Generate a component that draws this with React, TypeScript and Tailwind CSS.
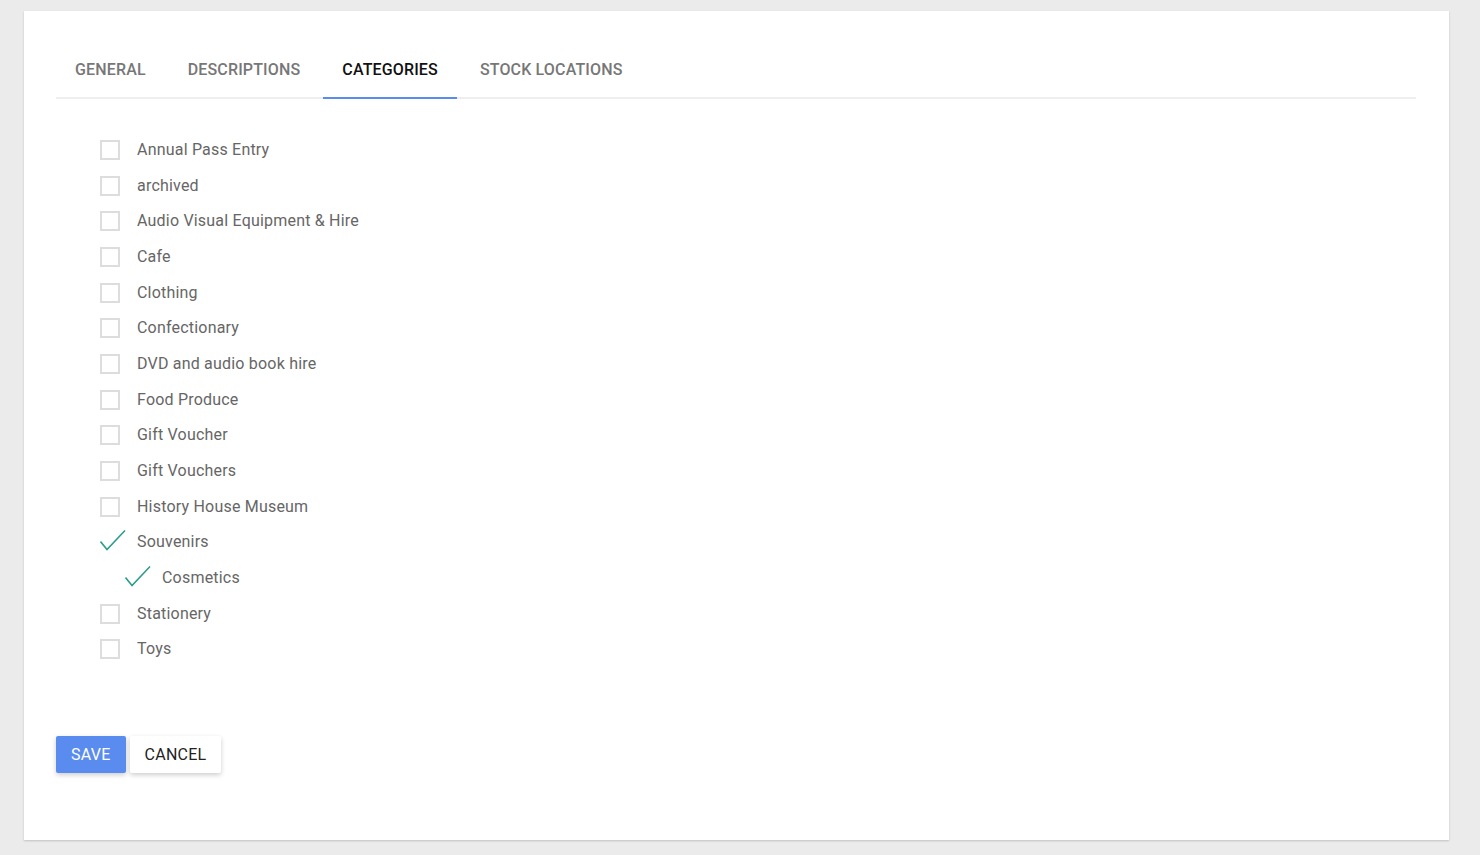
import { useState } from "react";

const tabs = ["General", "Descriptions", "Categories", "Stock Locations"];

type Category = { name: string; level: number };

const categories: Category[] = [
  { name: "Annual Pass Entry", level: 0 },
  { name: "archived", level: 0 },
  { name: "Audio Visual Equipment & Hire", level: 0 },
  { name: "Cafe", level: 0 },
  { name: "Clothing", level: 0 },
  { name: "Confectionary", level: 0 },
  { name: "DVD and audio book hire", level: 0 },
  { name: "Food Produce", level: 0 },
  { name: "Gift Voucher", level: 0 },
  { name: "Gift Vouchers", level: 0 },
  { name: "History House Museum", level: 0 },
  { name: "Souvenirs", level: 0 },
  { name: "Cosmetics", level: 1 },
  { name: "Stationery", level: 0 },
  { name: "Toys", level: 0 },
];

export default function App() {
  const [active, setActive] = useState("Categories");
  const [checked, setChecked] = useState<string[]>(["Souvenirs", "Cosmetics"]);

  const toggle = (name: string) =>
    setChecked((prev) =>
      prev.includes(name) ? prev.filter((n) => n !== name) : [...prev, name]
    );

  return (
    <div className="min-h-screen bg-[#ebebeb] pt-[11px] pl-6 pr-[31px] font-['Roboto',sans-serif]">
      <div className="h-[829px] bg-white pt-[30px] pl-8 pr-[33px] shadow-[0_1px_2px_rgba(0,0,0,0.18)]">
        {/* tabs */}
        <div className="flex gap-1 border-b-2 border-[#eeeeee]">
          {tabs.map((tab) => (
            <button
              key={tab}
              onClick={() => setActive(tab)}
              className={`-mb-[2px] flex h-[58px] items-center border-b-2 px-[19px] pt-[2px] text-base font-medium uppercase tracking-[0.15px] ${
                active === tab
                  ? "border-[#5a8cf0] text-[#111111]"
                  : "border-transparent text-[#777777]"
              }`}
            >
              {tab}
            </button>
          ))}
        </div>

        {/* category list */}
        <div className="mt-[33px] pl-11">
          {categories.map((cat) => {
            const on = checked.includes(cat.name);
            return (
              <label
                key={cat.name}
                onClick={() => toggle(cat.name)}
                className={`flex h-[35.7px] cursor-pointer items-center gap-[17px] text-base tracking-[0.2px] text-[#666666] ${
                  cat.level ? "pl-[25px]" : ""
                }`}
              >
                {on ? (
                  <svg width="26" height="24" viewBox="0 0 26 24" className="-mt-[2px] -mr-[6px]">
                    <polyline
                      points="0.5,12.5 7,20.5 25,1.5"
                      fill="none"
                      stroke="#2e9d8c"
                      strokeWidth="1.6"
                    />
                  </svg>
                ) : (
                  <span className="h-5 w-5 border-2 border-[#dddddd]" />
                )}
                <span>{cat.name}</span>
              </label>
            );
          })}
        </div>

        {/* actions */}
        <div className="mt-[69px] flex gap-1">
          <button className="h-[37px] rounded-[2px] bg-[#5a8cf0] px-[15px] text-base uppercase tracking-[0.25px] text-white shadow-[0_2px_5px_rgba(0,0,0,0.2)]">
            Save
          </button>
          <button className="h-[37px] rounded-[2px] bg-white px-[15px] text-base uppercase tracking-[0.25px] text-[#222222] shadow-[0_2px_5px_rgba(0,0,0,0.2)]">
            Cancel
          </button>
        </div>
      </div>
    </div>
  );
}
